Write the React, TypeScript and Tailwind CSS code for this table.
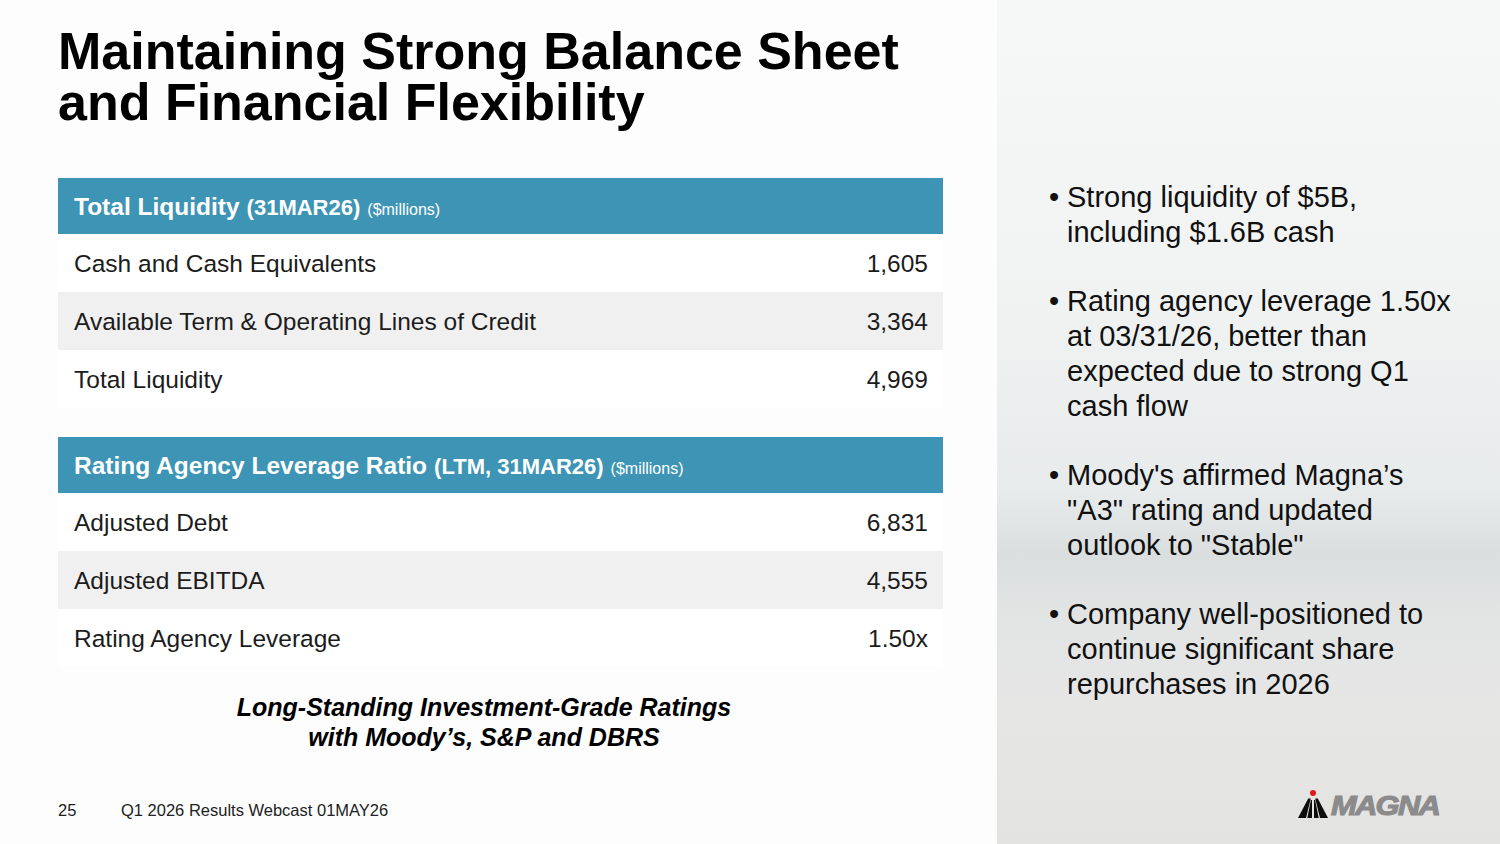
import React from "react";

const font = "font-['Liberation_Sans',Arial,sans-serif]";

type Row = { label: string; value: string };

const liquidity: Row[] = [
  { label: "Cash and Cash Equivalents", value: "1,605" },
  { label: "Available Term & Operating Lines of Credit", value: "3,364" },
  { label: "Total Liquidity", value: "4,969" },
];

const leverage: Row[] = [
  { label: "Adjusted Debt", value: "6,831" },
  { label: "Adjusted EBITDA", value: "4,555" },
  { label: "Rating Agency Leverage", value: "1.50x" },
];

const DataTable = ({ title, sub, rows }: { title: string; sub: string; rows: Row[] }) => {
  return (
    <div className="w-[885px]">
      <div className="h-[56px] bg-[#3e94b5] flex items-center px-4 pt-[3px] text-white">
        <span className="text-[24.5px] font-bold">{title}</span>
        <span className="text-[22px] font-bold ml-[7px]">{sub}</span>
        <span className="text-[16px] ml-[7px] mt-[4px]">($millions)</span>
      </div>
      {rows.map((r, i) => (
        <div
          key={r.label}
          className={`h-[58px] flex items-center justify-between pl-4 pr-[15px] pt-[3px] text-[24.5px] text-[#1c1c1c] ${
            i === 1 ? "bg-[#f0f0f0]" : "bg-white"
          }`}
        >
          <span>{r.label}</span>
          <span>{r.value}</span>
        </div>
      ))}
    </div>
  );
};

const Bullet = ({ lines }: { lines: string[] }) => {
  return (
    <div className="flex">
      <span className="w-[18px] shrink-0">•</span>
      <p>
        {lines.map((l, i) => (
          <React.Fragment key={i}>
            {l}
            {i < lines.length - 1 && <br />}
          </React.Fragment>
        ))}
      </p>
    </div>
  );
};

const MagnaLogo = () => {
  return (
    <div className="flex items-end gap-[3px]">
      <svg width="30" height="28" viewBox="0 0 30 28">
        <circle cx="15" cy="3" r="3" fill="#e3161b" />
        <polygon points="0,28 8,28 12.8,8.5 10.2,8.5" fill="#0d0d0d" />
        <polygon points="9.3,28 14,28 14,10 12.9,10" fill="#0d0d0d" />
        <polygon points="20.7,28 16,28 16,10 17.1,10" fill="#0d0d0d" />
        <polygon points="30,28 22,28 17.2,8.5 19.8,8.5" fill="#0d0d0d" />
      </svg>
      <span className="text-[28px] leading-[24px] font-bold italic tracking-[-1.5px] text-[#8b8b8b] [-webkit-text-stroke:1.2px_#8b8b8b] scale-x-[1.1] origin-left">
        MAGNA
      </span>
    </div>
  );
};

export default function App() {
  return (
    <div className={`w-[1500px] h-[844px] flex bg-[#fdfdfd] ${font}`}>
      <div className="w-[997px] h-full flex flex-col pl-[58px]">
        <h1 className="mt-[26px] text-[52px] leading-[51px] font-bold text-black">
          Maintaining Strong Balance Sheet
          <br />
          and Financial Flexibility
        </h1>

        <div className="mt-[50px]">
          <DataTable title="Total Liquidity" sub="(31MAR26)" rows={liquidity} />
        </div>
        <div className="mt-[29px]">
          <DataTable title="Rating Agency Leverage Ratio" sub="(LTM, 31MAR26)" rows={leverage} />
        </div>

        <p className="mt-[25px] w-[852px] text-center text-[25px] leading-[30px] font-bold italic text-black">
          Long-Standing Investment-Grade Ratings
          <br />
          with Moody’s, S&amp;P and DBRS
        </p>

        <div className="mt-auto mb-[24px] flex items-center text-[16.5px] leading-[20px] text-[#222]">
          <span className="w-[63px]">25</span>
          <span>Q1 2026 Results Webcast 01MAY26</span>
        </div>
      </div>

      <div className="w-[503px] h-full flex flex-col bg-[linear-gradient(180deg,#f6f7f7_0%,#f1f3f3_35%,#e8ebeb_58%,#dadede_66%,#e2e4e4_72%,#e6e6e5_85%,#e3e3e1_100%)]">
        <div className="mt-[180px] pl-[52px] flex flex-col gap-[34px] text-[29px] leading-[35px] text-[#111]">
          <Bullet lines={["Strong liquidity of $5B,", "including $1.6B cash"]} />
          <Bullet
            lines={[
              "Rating agency leverage 1.50x",
              "at 03/31/26, better than",
              "expected due to strong Q1",
              "cash flow",
            ]}
          />
          <Bullet lines={["Moody's affirmed Magna’s", "\"A3\" rating and updated", "outlook to \"Stable\""]} />
          <Bullet
            lines={[
              "Company well-positioned to",
              "continue significant share",
              "repurchases in 2026",
            ]}
          />
        </div>
        <div className="mt-auto mb-[26px] pl-[301px]">
          <MagnaLogo />
        </div>
      </div>
    </div>
  );
}
